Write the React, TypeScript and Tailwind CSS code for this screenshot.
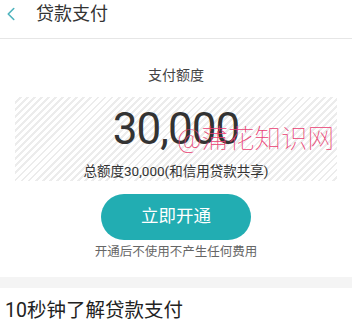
import { ChevronLeft } from "lucide-react";

const cjk = "font-['Roboto','Noto_Sans_CJK_SC',sans-serif]";

export default function App() {
  return (
    <div className={`relative w-[352px] h-[327px] overflow-hidden bg-white text-[#333] ${cjk}`}>
      {/* 顶部标题栏 */}
      <div className="h-[39px] flex items-center border-b border-[#e6e6e6]">
        <ChevronLeft className="ml-[0px] w-[22px] h-[22px] text-[#4db3bd] -mt-[10px]" strokeWidth={1.75} />
        <span className="ml-[14px] -mt-[10px] text-[18px] leading-none text-[#333]">贷款支付</span>
      </div>

      {/* 额度区 */}
      <div className="flex flex-col items-center">
        <div className="mt-[29px] text-[14px] leading-none text-[#444]">支付额度</div>
        <div className="mt-[15px] w-[322px] h-[84px] flex flex-col items-center bg-[repeating-linear-gradient(135deg,#ffffff_0px,#ffffff_3px,#ececec_3px,#ececec_5px)]">
          <div className="mt-[10px] text-[44px] leading-none tracking-[-1px] text-[#333] font-['Roboto',sans-serif]">30,000</div>
          <div className="mt-[14px] text-[13.5px] leading-none text-[#333]">总额度30,000(和信用贷款共享)</div>
        </div>
        <button className="mt-[13px] w-[150px] h-[46px] rounded-full bg-[#22adb2] text-white text-[17.5px] leading-none">
          立即开通
        </button>
        <div className="mt-[6px] text-[12.5px] leading-none text-[#666]">开通后不使用不产生任何费用</div>
      </div>

      <div className="mt-[18px] h-[11px] bg-[#f4f4f4]" />

      <div className="mt-[13px] ml-[5px] text-[19.5px] leading-none text-[#222]">10秒钟了解贷款支付</div>

      {/* 水印 */}
      <div className="absolute left-[177px] top-[126px] text-[26.5px] leading-none font-thin text-[#ea3f73]">
        @蒲花知识网
      </div>
    </div>
  );
}
